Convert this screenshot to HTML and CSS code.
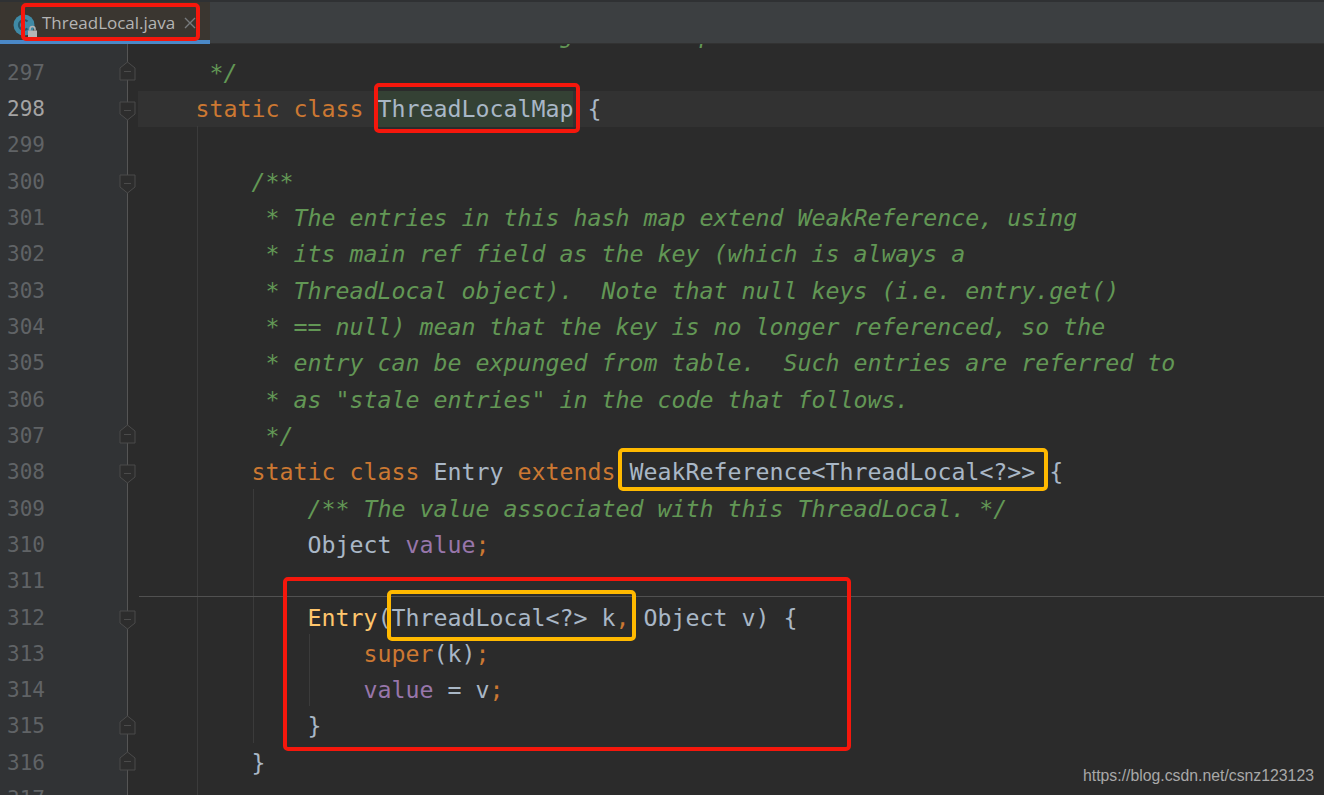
FILE: index.html
```html
<!DOCTYPE html>
<html lang="en">
<head>
<meta charset="utf-8">
<title>ThreadLocal.java</title>
<link rel="stylesheet" href="styles.css">
</head>
<body>
<div class="app">
  <header class="tabbar">
    <div class="tab">
      <svg class="file-icon" width="26" height="28" viewBox="0 0 26 28">
        <circle cx="12" cy="12" r="10.5" fill="#3f8aa6"/>
        <path d="M15.5 8.5a5 5 0 1 0 0 7" fill="none" stroke="#26566a" stroke-width="2.2"/>
        <path d="M18 17.5v-1.5a2.5 2.5 0 0 1 5 0v1.5" fill="none" stroke="#b5b5b5" stroke-width="1.5"/>
        <rect x="16" y="17.5" width="9" height="7.5" fill="#b5b5b5"/>
      </svg>
      <span class="tab-name">ThreadLocal.java</span>
      <svg class="tab-close" width="12" height="12" viewBox="0 0 12 12"><path d="M1 1l10 10M11 1L1 11" stroke="#777a7c" stroke-width="1.4"/></svg>
    </div>
  </header>
  <main class="editor">
    <div class="lines">
      <div class="row"><div class="gutter"><span class="num">296</span></div><div class="code com clipped">     * the table starts running out of space.</div></div>
      <div class="row"><div class="gutter"><span class="num">297</span><svg class="fold fold-up" width="17" height="20" viewBox="0 0 17 20"><path d="M1 19V7l7.5-6L16 7v12z M5 10.5h7" fill="#2d2d2d" stroke="#4b4b4b"/></svg></div><div class="code com">     */</div></div>
      <div class="row current"><div class="gutter"><span class="num">298</span><svg class="fold fold-down" width="17" height="20" viewBox="0 0 17 20"><path d="M1 1v12l7.5 6L16 13V1z M5 9.5h7" fill="#2d2d2d" stroke="#4b4b4b"/></svg></div><div class="code">    <span class="kw">static class</span> <span class="sel">ThreadLocalMap</span> {</div></div>
      <div class="row"><div class="gutter"><span class="num">299</span></div><div class="code"></div></div>
      <div class="row"><div class="gutter"><span class="num">300</span><svg class="fold fold-down" width="17" height="20" viewBox="0 0 17 20"><path d="M1 1v12l7.5 6L16 13V1z M5 9.5h7" fill="#2d2d2d" stroke="#4b4b4b"/></svg></div><div class="code com">        /**</div></div>
      <div class="row"><div class="gutter"><span class="num">301</span></div><div class="code com">         * The entries in this hash map extend WeakReference, using</div></div>
      <div class="row"><div class="gutter"><span class="num">302</span></div><div class="code com">         * its main ref field as the key (which is always a</div></div>
      <div class="row"><div class="gutter"><span class="num">303</span></div><div class="code com">         * ThreadLocal object).  Note that null keys (i.e. entry.get()</div></div>
      <div class="row"><div class="gutter"><span class="num">304</span></div><div class="code com">         * == null) mean that the key is no longer referenced, so the</div></div>
      <div class="row"><div class="gutter"><span class="num">305</span></div><div class="code com">         * entry can be expunged from table.  Such entries are referred to</div></div>
      <div class="row"><div class="gutter"><span class="num">306</span></div><div class="code com">         * as "stale entries" in the code that follows.</div></div>
      <div class="row"><div class="gutter"><span class="num">307</span><svg class="fold fold-up" width="17" height="20" viewBox="0 0 17 20"><path d="M1 19V7l7.5-6L16 7v12z M5 10.5h7" fill="#2d2d2d" stroke="#4b4b4b"/></svg></div><div class="code com">         */</div></div>
      <div class="row"><div class="gutter"><span class="num">308</span><svg class="fold fold-down" width="17" height="20" viewBox="0 0 17 20"><path d="M1 1v12l7.5 6L16 13V1z M5 9.5h7" fill="#2d2d2d" stroke="#4b4b4b"/></svg></div><div class="code">        <span class="kw">static class</span> Entry <span class="kw">extends</span> WeakReference&lt;ThreadLocal&lt;?&gt;&gt; {</div></div>
      <div class="row"><div class="gutter"><span class="num">309</span></div><div class="code com">            /** The value associated with this ThreadLocal. */</div></div>
      <div class="row"><div class="gutter"><span class="num">310</span></div><div class="code">            Object <span class="field">value</span><span class="kw">;</span></div></div>
      <div class="row"><div class="gutter"><span class="num">311</span></div><div class="code"></div></div>
      <div class="row"><div class="gutter"><span class="num">312</span><svg class="fold fold-down" width="17" height="20" viewBox="0 0 17 20"><path d="M1 1v12l7.5 6L16 13V1z M5 9.5h7" fill="#2d2d2d" stroke="#4b4b4b"/></svg></div><div class="code">            <span class="method">Entry</span>(ThreadLocal&lt;?&gt; k<span class="kw">,</span> Object v) {</div></div>
      <div class="row"><div class="gutter"><span class="num">313</span></div><div class="code">                <span class="kw">super</span>(k)<span class="kw">;</span></div></div>
      <div class="row"><div class="gutter"><span class="num">314</span></div><div class="code">                <span class="field">value</span> = v<span class="kw">;</span></div></div>
      <div class="row"><div class="gutter"><span class="num">315</span><svg class="fold fold-up" width="17" height="20" viewBox="0 0 17 20"><path d="M1 19V7l7.5-6L16 7v12z M5 10.5h7" fill="#2d2d2d" stroke="#4b4b4b"/></svg></div><div class="code">            }</div></div>
      <div class="row"><div class="gutter"><span class="num">316</span><svg class="fold fold-up" width="17" height="20" viewBox="0 0 17 20"><path d="M1 19V7l7.5-6L16 7v12z M5 10.5h7" fill="#2d2d2d" stroke="#4b4b4b"/></svg></div><div class="code">        }</div></div>
      <div class="row"><div class="gutter"><span class="num">317</span></div><div class="code"></div></div>
    </div>
  </main>
  <i class="guide g1"></i>
  <i class="guide g2"></i>
  <i class="guide g3"></i>
  <i class="separator"></i>
  <i class="mark red m-tab"></i>
  <i class="mark red m-map"></i>
  <i class="mark red m-ctor"></i>
  <i class="mark amber m-weak"></i>
  <i class="mark amber m-param"></i>
  <span class="watermark">https://blog.csdn.net/csnz123123</span>
</div>
</body>
</html>
```
FILE: styles.css
```css
* { box-sizing: border-box; }
html, body { margin: 0; height: 100%; background: #2b2b2b; }
.app {
  position: relative;
  width: 1324px;
  height: 795px;
  overflow: hidden;
  display: flex;
  flex-direction: column;
}
.tabbar {
  flex: 0 0 44px;
  background: #3c3f41;
  border-top: 2px solid #2f3133;
  border-bottom: 1px solid #323232;
  display: flex;
}
.tab {
  width: 210px;
  height: 42px;
  margin-bottom: -1px;
  background: #3a3630;
  border-bottom: 4px solid #4a88c7;
  display: flex;
  align-items: center;
  position: relative;
  padding: 3px 0 0 42px;
  font: 17px/1 "Open Sans", "Noto Sans", sans-serif;
  color: #b4b4b4;
}
.file-icon { position: absolute; left: 12px; top: 11px; }
.tab-name { white-space: nowrap; }
.tab-close { margin-left: 9px; margin-top: 1px; }
.editor { flex: 1; overflow: hidden; background: #2b2b2b; }
.lines { margin-top: -25.5px; }
.row { display: flex; height: 36.32px; }
.row.current { background: #323232; }
.gutter {
  flex: 0 0 128px;
  position: relative;
  background: #313335;
  border-right: 1px solid #555;
  font: 21px/36.32px "DejaVu Sans Mono", monospace;
  color: #606366;
  padding-left: 7px;
}
.current .gutter { color: #a4a3a3; }
.row.current::before {
  content: "";
  order: 1;
  flex: 0 0 10px;
  background: #2b2b2b;
}
.row.current .code { order: 2; padding-left: 1.5px; }
.fold { position: absolute; right: -8.5px; z-index: 1; }
.fold-up { top: 6.5px; }
.fold-down { top: 10px; }
.code {
  flex: 1;
  padding-left: 11.5px;
  font: 23.25px/36.32px "DejaVu Sans Mono", monospace;
  color: #a9b7c6;
  white-space: pre;
}
.code.clipped { margin-top: -2px; }
.com { color: #629755; font-style: italic; }
.kw { color: #cc7832; }
.field { color: #9876aa; }
.method { color: #ffc66d; }
.sel {
  display: inline-block;
  background: #344134;
  box-shadow: inset 1px 0 0 #bbb;
}
.guide { position: absolute; width: 1px; background: #3b3b3b; }
.g1 { left: 197px; top: 126px; bottom: 0; }
.g2 { left: 253px; top: 489px; height: 254px; }
.g3 { left: 309px; top: 634px; height: 72px; }
.separator { position: absolute; left: 139px; right: 0; top: 596px; height: 1px; background: #515151; }
.mark { position: absolute; border: 4px solid; border-radius: 5px; }
.red { border-color: #f5170c; }
.amber { border-color: #ffb900; }
.m-tab { left: 21px; top: 3px; width: 179px; height: 38px; }
.m-map { left: 374px; top: 83px; width: 206px; height: 50px; }
.m-ctor { left: 283px; top: 577px; width: 568px; height: 174px; }
.m-weak { left: 618px; top: 448px; width: 430px; height: 43px; }
.m-param { left: 387px; top: 590px; width: 249px; height: 51px; }
.watermark {
  position: absolute;
  left: 1083px;
  top: 766px;
  font: 15.8px/20px "Liberation Sans", sans-serif;
  color: #a8a8a8;
  white-space: nowrap;
}
```
